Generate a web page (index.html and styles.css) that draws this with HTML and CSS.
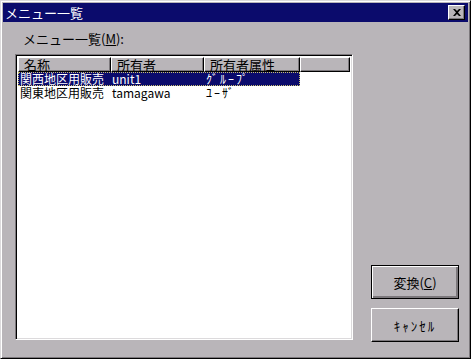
FILE: index.html
```html
<!DOCTYPE html>
<html>
<head>
    <title>メニュー一覧</title>
    <link rel="stylesheet" href="styles.css">
</head>
<body>
    <div class="window">
        <div class="title-bar">
            <span class="title-text">メニュー一覧</span>
            <button class="close-btn">
                <svg width="8" height="7" viewBox="0 0 8 7"><path d="M0 0h2l2 2 2-2h2L5 3.5 8 7H6L4 5 2 7H0l3-3.5z" fill="#000"/></svg>
            </button>
        </div>

        <div class="dialog-body">
            <div class="list-area">
                <div class="list-label">メニュー一覧(<u>M</u>):</div>
                <div class="list-box">
                    <div class="list-header">
                        <div class="col col-name">名称</div>
                        <div class="col col-owner">所有者</div>
                        <div class="col col-attr">所有者属性</div>
                        <div class="col col-rest"></div>
                    </div>
                    <div class="list-row selected">
                        <div class="cell col-name">関西地区用販売</div>
                        <div class="cell col-owner">unit1</div>
                        <div class="cell col-attr hw">ｸﾞﾙｰﾌﾟ</div>
                    </div>
                    <div class="list-row">
                        <div class="cell col-name">関東地区用販売</div>
                        <div class="cell col-owner">tamagawa</div>
                        <div class="cell col-attr hw">ﾕｰｻﾞ</div>
                    </div>
                </div>
            </div>

            <div class="button-column">
                <button class="win-btn default">変換(<u>C</u>)</button>
                <button class="win-btn hw">ｷｬﾝｾﾙ</button>
            </div>
        </div>
    </div>
</body>
</html>
```

FILE: styles.css
```css
body {
    margin: 0;
    overflow: hidden;
    font-family: "Noto Sans CJK JP", "DejaVu Sans", sans-serif;
    font-size: 12px;
}

.window {
    box-sizing: border-box;
    width: 471px;
    height: 359px;
    display: flex;
    flex-direction: column;
    background: #b9b5b9;
    border: 1px solid;
    border-color: #dcdadc #000 #000 #dcdadc;
    box-shadow: inset 1px 1px #fff, inset -1px -1px #7c787c;
    padding: 2px;
}

.title-bar {
    height: 19px;
    display: flex;
    align-items: center;
    justify-content: space-between;
    background: #0b0b6c;
    padding: 0 3px 0 2px;
}

.title-text {
    color: #fff;
    font-size: 13px;
    line-height: 19px;
}

.close-btn {
    box-sizing: border-box;
    width: 17px;
    height: 15px;
    padding: 0;
    display: flex;
    align-items: center;
    justify-content: center;
    background: #b9b5b9;
    border: 1px solid;
    border-color: #fff #000 #000 #fff;
    box-shadow: inset -1px -1px #7c787c;
}

.dialog-body {
    flex: 1;
    display: flex;
    padding: 0 9px 14px 12px;
}

.list-area {
    display: flex;
    flex-direction: column;
}

.list-label {
    height: 22px;
    padding: 10px 0 0 8px;
    line-height: 14px;
    font-size: 13px;
    color: #000;
}

.list-box {
    box-sizing: border-box;
    width: 338px;
    height: 286px;
    background: #fff;
    border: 1px solid;
    border-color: #7c787c #fff #fff #7c787c;
    box-shadow: inset 1px 1px #000, inset -1px -1px #dcdadc;
    padding: 2px;
}

.list-header {
    display: flex;
    height: 15px;
}

.col {
    box-sizing: border-box;
    height: 15px;
    background: #b9b5b9;
    border: 1px solid;
    border-color: #fff #000 #000 #fff;
    box-shadow: inset -1px -1px #7c787c;
    padding-left: 5px;
    line-height: 13px;
    font-size: 13px;
    color: #000;
}

.col-name {
    width: 93px;
}

.col-owner {
    width: 93px;
}

.col-attr {
    width: 96px;
}

.col-rest {
    flex: 1;
}

.list-row {
    display: flex;
    height: 14px;
    line-height: 14px;
    font-size: 12px;
    color: #000;
    width: 282px;
}

.list-row .cell {
    box-sizing: border-box;
    padding-left: 2px;
    white-space: nowrap;
}

.list-row .col-owner {
    padding-left: 1px;
}

.list-row.selected {
    background: #0b0b6c;
    color: #fff;
    outline: 1px dotted #c8c070;
    outline-offset: -1px;
}

.hw {
    letter-spacing: 2px;
}

.button-column {
    flex: 1;
    display: flex;
    flex-direction: column;
    justify-content: flex-end;
    align-items: flex-end;
    gap: 9px;
}

.win-btn {
    box-sizing: border-box;
    width: 88px;
    height: 34px;
    font-family: "Noto Sans CJK JP", "DejaVu Sans", sans-serif;
    font-size: 13px;
    color: #000;
    background: #b9b5b9;
    border: 1px solid;
    border-color: #fff #000 #000 #fff;
    box-shadow: inset -1px -1px #7c787c;
    padding: 0;
}

.win-btn.default {
    border: 1px solid #000;
    box-shadow: inset 1px 1px #fff, inset -2px -2px #7c787c, inset -1px -1px #000;
}
```
